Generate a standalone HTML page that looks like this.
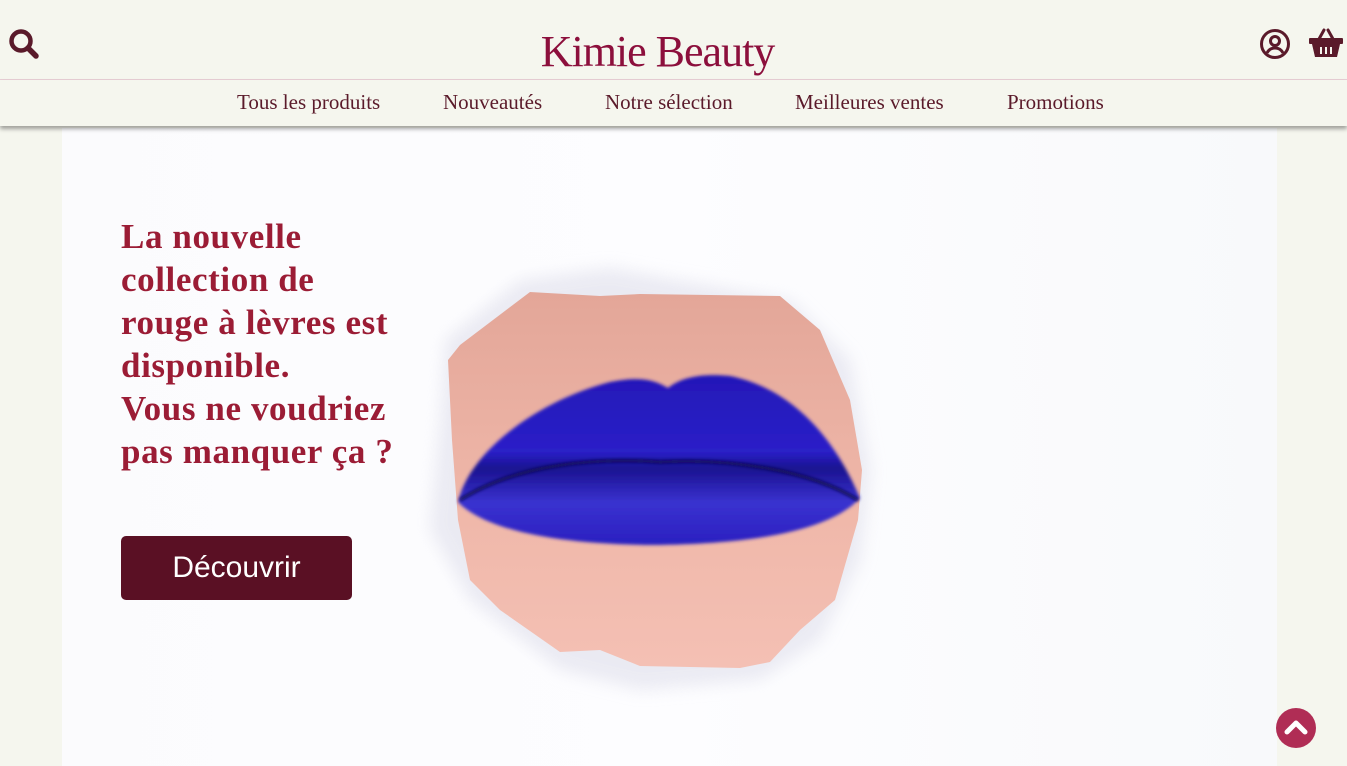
<!DOCTYPE html>
<html><head><meta charset="utf-8"><style>
*{margin:0;padding:0;box-sizing:border-box}
body{width:1347px;height:766px;overflow:hidden;background:#f5f6ee;font-family:"Liberation Serif",serif;position:relative}
.top{position:absolute;left:0;top:0;width:1347px;height:80px;border-bottom:1px solid #e8cfd5}
.logo{position:absolute;left:0;width:1315px;text-align:center;top:26px;font-size:44px;color:#8c0f3c;letter-spacing:-1px}
.nav{position:absolute;top:80px;left:0;width:1347px;height:46px;box-shadow:0 3px 4px rgba(0,0,0,0.35);background:#f5f6ee;z-index:2}
.nav span{position:absolute;top:10px;font-size:21px;color:#5a1a2a}
.hero{position:absolute;left:62px;top:128px;width:1215px;height:638px;background:linear-gradient(90deg,#fbfbfd,#fdfdff 50%,#f8f9fb)}
h1{position:absolute;left:121px;top:215px;font-size:35px;line-height:43px;color:#9b1c35;font-weight:bold;white-space:nowrap;letter-spacing:0.6px}
.btn{position:absolute;left:121px;top:536px;width:231px;height:64px;background:#5a1024;border-radius:5px;color:#fff;font-family:"Liberation Sans",sans-serif;font-size:30px;text-align:center;line-height:64px}
.up{position:absolute;left:1276px;top:708px;width:40px;height:40px;border-radius:50%;background:#b02d55}
</style></head><body>
<div class="top">
<svg style="position:absolute;left:8px;top:28px" width="32" height="32" viewBox="0 0 32 32"><circle cx="13" cy="13" r="9.5" fill="none" stroke="#5a1a2a" stroke-width="4.5"/><line x1="20" y1="20" x2="28" y2="28" stroke="#5a1a2a" stroke-width="5.5" stroke-linecap="round"/></svg>
<div class="logo">Kimie Beauty</div>
<svg style="position:absolute;left:1259px;top:28px" width="32" height="32" viewBox="0 0 32 32"><circle cx="16" cy="16" r="13.5" fill="none" stroke="#5a1a2a" stroke-width="3"/><circle cx="16" cy="13" r="4.5" fill="none" stroke="#5a1a2a" stroke-width="3"/><path d="M8 25c2-4 5-5 8-5s6 1 8 5" fill="none" stroke="#5a1a2a" stroke-width="3"/></svg>
<svg style="position:absolute;left:1309px;top:28px" width="34" height="30" viewBox="0 0 34 30"><path d="M10 11 L15 2 M24 11 L19 2" stroke="#5a1a2a" stroke-width="3" stroke-linecap="round"/><rect x="0" y="10" width="34" height="6" rx="1" fill="#5a1a2a"/><path d="M3 16h28l-3 13H6z" fill="#5a1a2a"/><path d="M12 19v7M17 19v7M22 19v7" stroke="#f5f6ee" stroke-width="2"/></svg>
</div>
<div class="nav">
<span style="left:237px">Tous les produits</span>
<span style="left:443px">Nouveautés</span>
<span style="left:605px">Notre sélection</span>
<span style="left:795px">Meilleures ventes</span>
<span style="left:1007px">Promotions</span>
</div>
<div class="hero"></div>
<svg style="position:absolute;left:0;top:0" width="1347" height="766">
<defs><filter id="b"><feGaussianBlur stdDeviation="8"/></filter><filter id="s"><feGaussianBlur stdDeviation="1.5"/></filter>
<linearGradient id="sk" x1="0" y1="0" x2="0" y2="1"><stop offset="0" stop-color="#e3a698"/><stop offset="0.6" stop-color="#f0b8aa"/><stop offset="1" stop-color="#f4c0b4"/></linearGradient>
<linearGradient id="lp" x1="0" y1="0" x2="0" y2="1"><stop offset="0" stop-color="#2418b8"/><stop offset="0.45" stop-color="#2a20c8"/><stop offset="0.55" stop-color="#1a1290"/><stop offset="0.75" stop-color="#3a32d0"/><stop offset="1" stop-color="#2a20c0"/></linearGradient></defs>
<polygon points="520,280 610,268 790,300 850,360 870,470 860,560 820,640 760,680 640,690 560,670 470,600 430,530 440,420 445,340" fill="#e6e6f0" filter="url(#b)" opacity="0.8"/>
<polygon points="530,292 600,296 640,294 780,296 820,330 850,400 862,470 858,520 835,600 800,630 770,662 740,668 640,666 600,650 560,652 500,610 470,580 458,520 452,440 448,360 460,345" fill="url(#sk)"/>
<path d="M458,502 C470,450 540,400 610,382 C640,376 655,380 668,388 C680,378 700,373 730,376 C800,390 840,450 860,498 C840,520 790,543 660,545 C540,545 480,525 458,502Z" fill="url(#lp)" filter="url(#s)"/>
<path d="M460,500 C520,462 600,458 660,462 C730,458 810,470 858,500" fill="none" stroke="#0e0850" stroke-width="3" filter="url(#s)"/>
</svg>
<h1>La nouvelle<br>collection de<br>rouge à lèvres est<br>disponible.<br>Vous ne voudriez<br>pas manquer ça ?</h1>
<div class="btn">Découvrir</div>
<div class="up"><svg width="40" height="40" viewBox="0 0 40 40"><path d="M11 24 L20 15 L29 24" fill="none" stroke="#fff" stroke-width="5" stroke-linecap="round" stroke-linejoin="round"/></svg></div>
</body></html>
